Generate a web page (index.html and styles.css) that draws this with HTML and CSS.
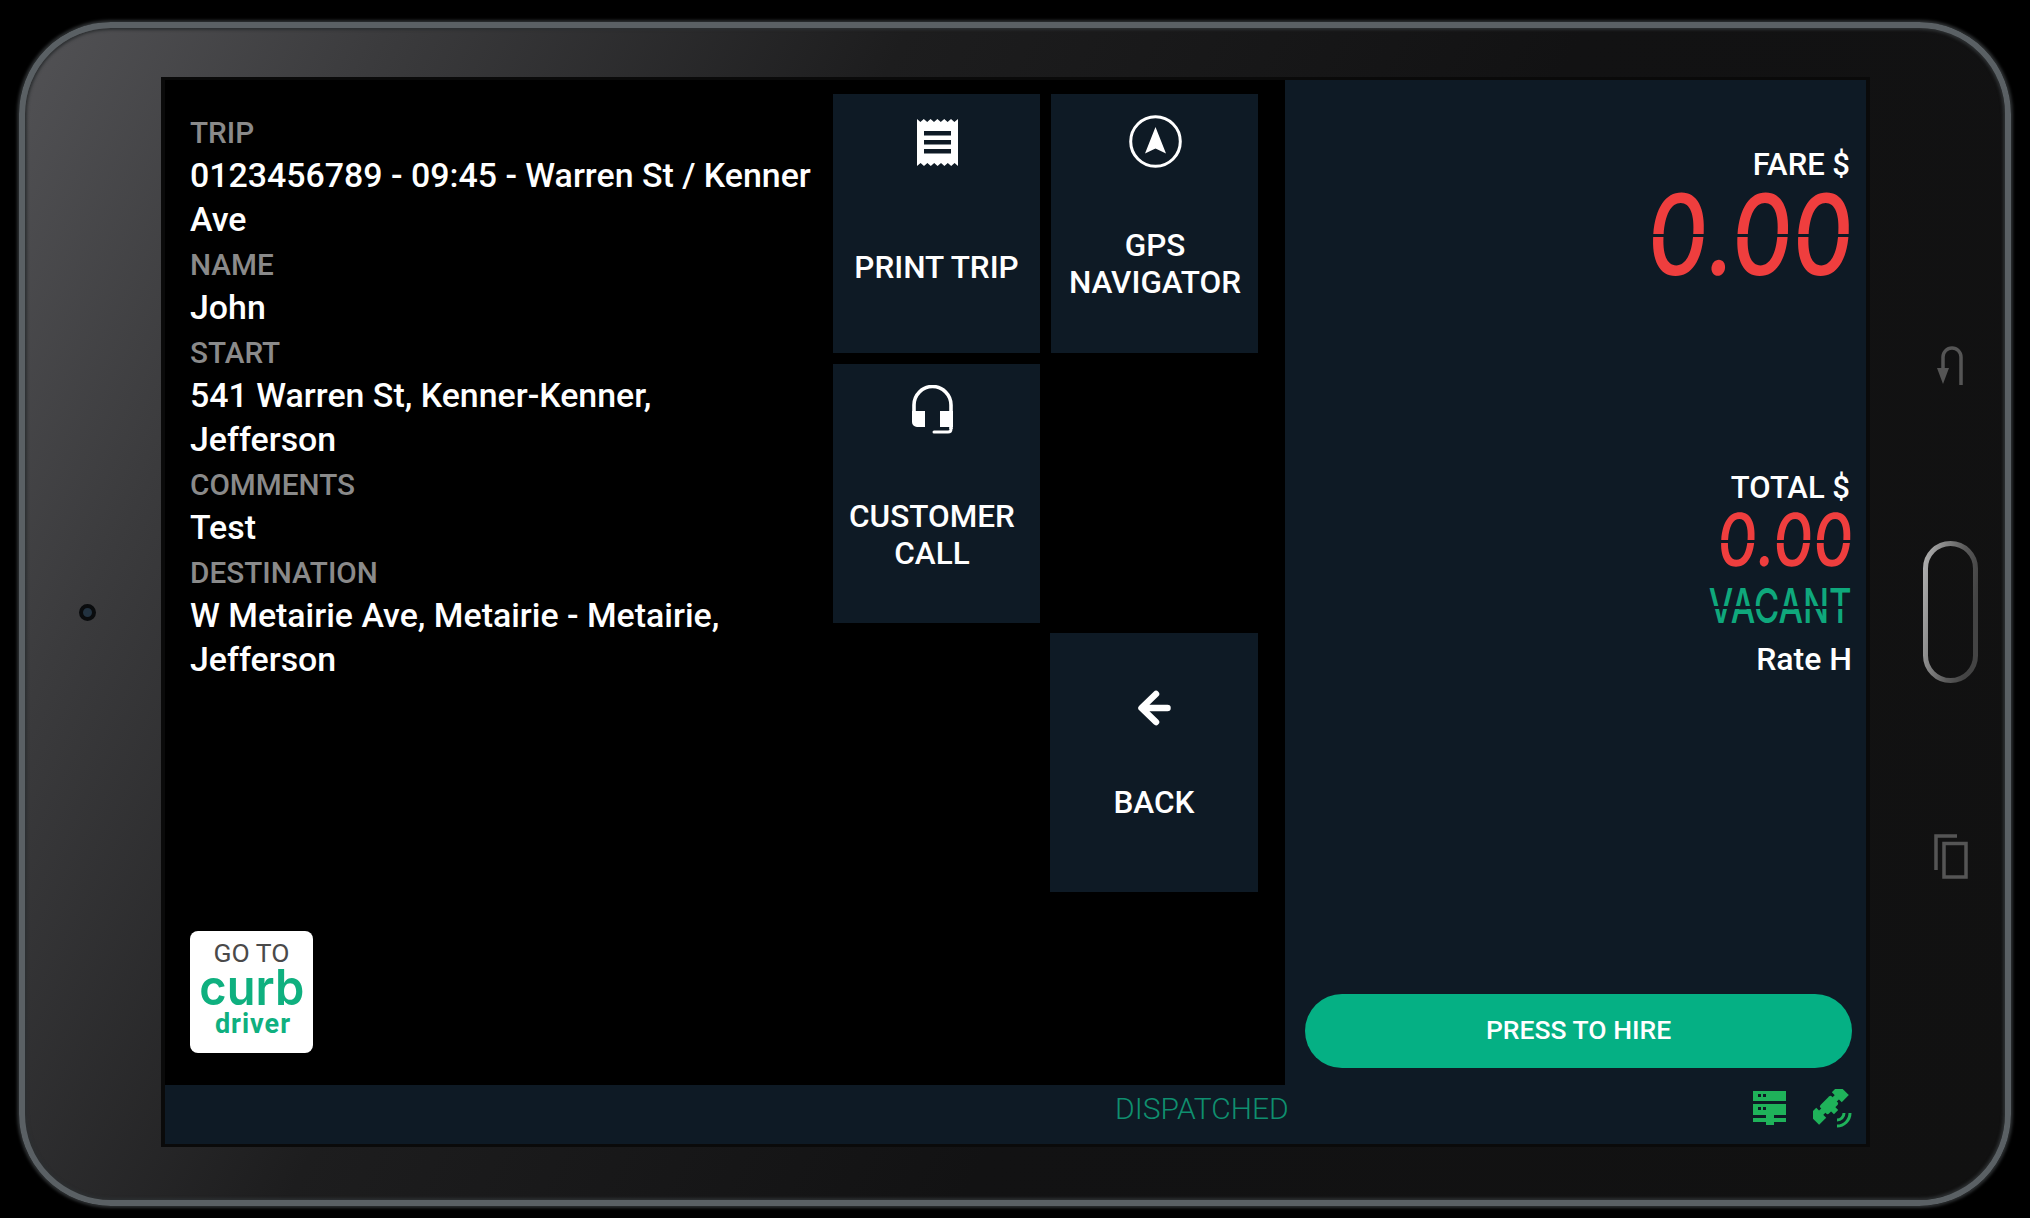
FILE: index.html
```html
<!DOCTYPE html>
<html lang="en">
<head>
  <meta charset="UTF-8" />
  <meta name="viewport" content="width=device-width, initial-scale=1.0"/>
  <title>Taxi Meter - Trip Details</title>
  <link rel="stylesheet" href="styles.css">
</head>
<body>
  <div class="tablet">
    <div class="camera-col"><span class="camera"></span></div>

    <main class="screen">
      <div class="screen-top">
        <section class="left-pane">
          <div class="trip-info">
            <dl class="trip-list">
              <dt>TRIP</dt>
              <dd>0123456789 - 09:45 - Warren St / Kenner<br>Ave</dd>
              <dt>NAME</dt>
              <dd>John</dd>
              <dt>START</dt>
              <dd>541 Warren St, Kenner-Kenner,<br>Jefferson</dd>
              <dt>COMMENTS</dt>
              <dd>Test</dd>
              <dt>DESTINATION</dt>
              <dd>W Metairie Ave, Metairie - Metairie,<br>Jefferson</dd>
            </dl>
            <div class="curb-badge">
              <span class="curb-goto">GO TO</span>
              <span class="curb-word">curb</span>
              <span class="curb-driver">driver</span>
            </div>
          </div>

          <div class="tiles">
            <div class="tile tile-print">
              <svg class="icon" width="41" height="47" viewBox="0 0 41 47">
                <path fill="#fff" d="M0 0l3.4 3 3.4-3 3.4 3 3.4-3 3.4 3 3.4-3 3.4 3 3.4-3 3.4 3 3.4-3 3.4 3L41 0v47l-3.4-3-3.4 3-3.4-3-3.4 3-3.4-3-3.4 3-3.4-3-3.4 3-3.4-3-3.4 3-3.4-3L0 47z"/>
                <path fill="#0e1a25" d="M7 12h27v4.6H7zM7 21h27v4.6H7zM7 30h27v4.6H7z"/>
              </svg>
              <div class="tile-label">PRINT TRIP</div>
            </div>
            <div class="tile tile-gps">
              <svg class="icon" width="53" height="53" viewBox="0 0 53 53">
                <circle cx="26.5" cy="26.5" r="24.8" fill="none" stroke="#fff" stroke-width="3"/>
                <path fill="#fff" d="M26.5 12L37 38.5 26.5 33.5 16 38.5z"/>
              </svg>
              <div class="tile-label">GPS<br>NAVIGATOR</div>
            </div>
            <div class="tile tile-call">
              <svg class="icon" width="41" height="49" viewBox="0 0 41 49">
                <path fill="none" stroke="#fff" stroke-width="3.6" d="M2 28V20a18.500 18.500 0 0 1 37 0v24"/>
                <path fill="#fff" d="M0 26h13v16H5a5 5 0 0 1-5-5zM28 26h13v16H28z"/>
                <path fill="none" stroke="#fff" stroke-width="3" stroke-linecap="round" d="M22 47H36Q39 47 39 44"/>
              </svg>
              <div class="tile-label">CUSTOMER<br>CALL</div>
            </div>
            <div class="tile tile-back">
              <svg class="icon" width="34" height="36" viewBox="0 0 34 36">
                <path fill="none" stroke="#fff" stroke-width="6.500" stroke-linecap="round" stroke-linejoin="round" d="M30.500 18H5M19 4L4.500 18 19 32"/>
              </svg>
              <div class="tile-label">BACK</div>
            </div>
          </div>
        </section>

        <aside class="meter-pane">
          <div class="meter-label meter-fare">FARE $</div>
          <div class="lcd lcd-fare"><span>0.00</span></div>
          <div class="meter-label meter-total">TOTAL $</div>
          <div class="lcd lcd-total"><span>0.00</span></div>
          <div class="lcd lcd-status"><span>VACANT</span></div>
          <div class="meter-label meter-rate">Rate H</div>
          <button class="hire-btn">PRESS TO HIRE</button>
        </aside>
      </div>

      <footer class="status-bar">
        <span class="status-text">DISPATCHED</span>
        <svg class="status-server" width="33" height="34" viewBox="0 0 33 34">
          <path fill="#1fb25a" d="M0 0h33v10H0zM0 13h33v11H0zM13 24h8v3h12v4H21v3h-8v-3H0v-4h13z"/>
          <path fill="#0e1a25" d="M5 3h3v3H5zM10 3h3v3h-3zM5 16h3v3H5zM10 16h3v3h-3z"/>
        </svg>
        <svg class="status-sat" width="39" height="39" viewBox="0 0 39 39">
          <g fill="#1fb25a" transform="rotate(-45 16 16)">
            <rect x="-5" y="9" width="10" height="14"/>
            <rect x="4" y="13" width="24" height="6"/>
            <rect x="8" y="10" width="16" height="12" rx="2"/>
            <rect x="27" y="9" width="10" height="14"/>
            <rect x="13" y="21" width="6" height="5"/>
          </g>
          <g fill="none" stroke="#1fb25a" stroke-width="3">
            <path d="M31 24A7 7 0 0 1 24 31"/>
            <path d="M37 24A13 13 0 0 1 24 37"/>
          </g>
        </svg>
      </footer>
    </main>

    <div class="side-keys">
      <svg class="key-back" width="28" height="39" viewBox="0 0 28 39">
        <path fill="none" stroke="#555" stroke-width="3.500" d="M24 39V11a9 9 0 0 0-18 0v12"/>
        <path fill="#555" d="M0 22h12L6 38z"/>
      </svg>
      <svg class="key-home" width="55" height="142" viewBox="0 0 55 142">
        <defs>
          <linearGradient id="homeStroke" x1="0" y1="0" x2="1" y2="0.4">
            <stop offset="0" stop-color="#b0b0b0"/>
            <stop offset="0.7" stop-color="#5a5a5a"/>
            <stop offset="1" stop-color="#444"/>
          </linearGradient>
        </defs>
        <rect x="2.500" y="2.500" width="50" height="137" rx="25" fill="none" stroke="url(#homeStroke)" stroke-width="5"/>
      </svg>
      <svg class="key-recent" width="34" height="45" viewBox="0 0 34 45">
        <path fill="none" stroke="#555" stroke-width="3.500" d="M2 36V2H23"/>
        <rect x="10" y="9.500" width="22" height="33.500" fill="none" stroke="#555" stroke-width="3.500"/>
      </svg>
    </div>
  </div>
</body>
</html>
```
FILE: styles.css
```css
* {
  box-sizing: border-box;
}
html, body {
  margin: 0;
  height: 100%;
}
body {
  background: #000;
  font-family: Roboto, "Liberation Sans", sans-serif;
  padding: 22px 19px 12px;
  overflow: hidden;
}
.tablet {
  display: flex;
  width: 1992px;
  height: 1184px;
  border: 6px solid #5a6064;
  border-radius: 92px;
  box-shadow: 0 0 3px 2px #2c2f31, inset 0 0 3px 2px #2c2f31;
  background: linear-gradient(118deg, #525255 0%, #3b3b3d 14%, #1d1d1e 34%, #121213 60%, #111 100%);
}
.camera-col {
  width: 136px;
  padding: 576px 0 0 54px;
}
.camera {
  display: block;
  width: 17px;
  height: 17px;
  border-radius: 50%;
  background: #223240;
  border: 4px solid #0a0c0e;
}
.screen {
  width: 1709px;
  height: 1070px;
  margin-top: 49px;
  border-style: solid;
  border-width: 3px 4px;
  border-color: #0a0a0a;
  background: #0e1a25;
  display: flex;
  flex-direction: column;
}
.screen-top {
  display: flex;
  height: 1005px;
}
.left-pane {
  display: flex;
  width: 1120px;
  background: #000;
}
.trip-info {
  width: 668px;
  padding: 31px 0 32px 25px;
  display: flex;
  flex-direction: column;
  justify-content: space-between;
}
.trip-list {
  margin: 0;
  font-size: 33.900px;
  line-height: 44px;
}
.trip-list dt {
  color: #8a8a8a;
  font-size: 29.700px;
  font-weight: 500;
}
.trip-list dd {
  margin: -1px 0 1px;
  color: #fff;
  font-weight: 500;
}
.curb-badge {
  width: 123px;
  height: 122px;
  background: #fff;
  border-radius: 8px;
  display: flex;
  flex-direction: column;
  align-items: center;
  padding-top: 8px;
}
.curb-goto {
  color: #4a4a4a;
  font-size: 26.500px;
  line-height: 28px;
}
.curb-word {
  color: #0fb07f;
  font-family: Inter, sans-serif;
  font-weight: 600;
  font-size: 50px;
  line-height: 40px;
  transform: scaleX(0.94);
}
.curb-driver {
  color: #0fb07f;
  font-weight: 700;
  font-size: 27px;
  line-height: 30px;
  letter-spacing: 1px;
  margin-top: 2px;
  padding-left: 3px;
}
.tiles {
  display: grid;
  grid-template-columns: 207px 207px;
  grid-template-rows: 259px 259px 259px;
  gap: 10.5px 11px;
  padding-top: 14px;
}
.tile {
  background: #0e1a25;
  color: #fff;
  display: flex;
  flex-direction: column;
  align-items: center;
}
.icon {
  flex: none;
}
.tile-label {
  font-size: 31.500px;
  font-weight: 500;
  line-height: 37px;
  text-align: center;
}
.tile-print {
  padding-top: 25px;
  padding-left: 2px;
}
.tile-print .tile-label {
  margin-top: 83px;
  margin-right: 2px;
}
.tile-gps {
  padding-top: 21px;
  padding-left: 1px;
}
.tile-gps .tile-label {
  margin-top: 59px;
}
.tile-call {
  padding-top: 21px;
  padding-right: 9px;
}
.tile-call .tile-label {
  margin-top: 64px;
}
.tile-back {
  grid-column: 2;
  grid-row: 3;
  margin-left: -1px;
  padding-top: 57px;
}
.tile-back .tile-label {
  margin-top: 58px;
}
.meter-pane {
  width: 581px;
  padding: 66px 14px 17px 20px;
  display: flex;
  flex-direction: column;
  align-items: flex-end;
  color: #fff;
}
.meter-label {
  font-size: 31px;
  font-weight: 500;
  line-height: 38px;
  padding-right: 2px;
}
.lcd {
  position: relative;
  color: #ef3e3e;
  font-family: Inter, Roboto, sans-serif;
  font-weight: 500;
  margin-right: -2px;
}
.lcd span {
  display: block;
  transform-origin: right center;
}
/* break across the strokes, like the gap between segments */
.lcd::after {
  content: "";
  position: absolute;
  left: -20px;
  right: 0;
  top: 50%;
  height: 3px;
  background: #0e1a25;
}
.lcd-fare {
  margin-top: 7px;
  height: 86px;
  font-size: 112px;
  line-height: 86px;
}
.lcd-fare span {
  transform: skewX(-4deg) scaleX(0.84);
}
.meter-total {
  margin-top: 192px;
}
.lcd-total {
  margin-top: 5px;
  height: 56px;
  font-size: 73px;
  line-height: 56px;
}
.lcd-total span {
  transform: skewX(-4deg) scaleX(0.85);
}
.lcd-status {
  margin-top: 20px;
  margin-right: 0;
  height: 35px;
  color: #0fa87c;
  font-size: 48px;
  font-weight: 500;
  line-height: 35px;
}
.lcd-status span {
  transform: scaleX(0.72);
}
.meter-rate {
  margin-top: 17px;
  font-size: 32px;
  padding-right: 0;
}
.hire-btn {
  margin-top: auto;
  width: 547px;
  height: 74px;
  border: none;
  border-radius: 37px;
  padding: 0 0 3px;
  background: #05b084;
  color: #fff;
  font-family: inherit;
  font-size: 26.500px;
  font-weight: 500;
}
.status-bar {
  flex: 1;
  display: flex;
  align-items: center;
  padding: 0 14px 13px 950px;
}
.status-text {
  color: #0f8f6f;
  font-size: 30px;
  font-weight: 300;
}
.status-server {
  margin-left: auto;
  margin-right: 27px;
}
.side-keys {
  flex: 1;
  display: flex;
  flex-direction: column;
  align-items: center;
  padding: 318px 0 0 26px;
}
.key-home {
  margin-top: 156px;
}
.key-recent {
  margin-top: 151px;
}
```
